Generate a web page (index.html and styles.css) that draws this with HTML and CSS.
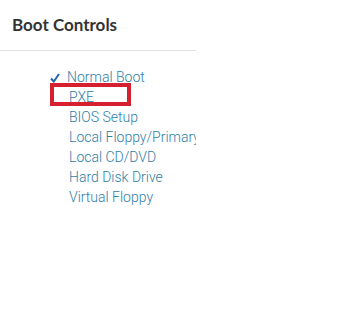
FILE: index.html
```html
<!DOCTYPE HTML>
<html>
<head>
  <meta charset="UTF-8"/>
  <title>Boot Controls</title>
  <link rel="stylesheet" href="styles.css">
</head>
<body>
  <div class="panel">
    <h2 class="panel-title">Boot Controls</h2>
    <ul class="boot-menu">
      <li class="checked">
        <svg class="check" width="10" height="10" viewBox="0 0 10 10"><polyline points="1,5.5 3.8,8.5 9,1" fill="none" stroke="#2566b0" stroke-width="2"/></svg>Normal Boot
      </li>
      <li class="marked">PXE</li>
      <li>BIOS Setup</li>
      <li>Local Floppy/Primary</li>
      <li>Local CD/DVD</li>
      <li>Hard Disk Drive</li>
      <li>Virtual Floppy</li>
    </ul>
  </div>
</body>
</html>
```

FILE: styles.css
```css
body {
  margin: 0;
  background-color: #FFF;
  -webkit-font-smoothing: antialiased;
}

.panel {
  width: 196px;
  overflow: hidden;
}

.panel-title {
  margin: 0;
  padding: 14px 0 16px 12px;
  height: 20px;
  line-height: 20px;
  font: bold 17px Lato, "Open Sans", sans-serif;
  color: #333;
  border-bottom: 1px solid #e2e2e2;
}

.boot-menu {
  list-style: none;
  margin: 16px 0 0 0;
  padding: 0 0 0 69px;
  font: 300 14px Roboto, "Liberation Sans", sans-serif;
  line-height: 20px;
  color: #2f7ea6;
  white-space: nowrap;
}

.boot-menu li {
  position: relative;
}

.check {
  position: absolute;
  left: -17px;
  top: 6px;
}

.checked {
  margin-left: -2px;
}

.marked::before {
  content: "";
  position: absolute;
  left: -19px;
  top: -4px;
  width: 73px;
  height: 15px;
  border: 4px solid #d7202f;
}
```
